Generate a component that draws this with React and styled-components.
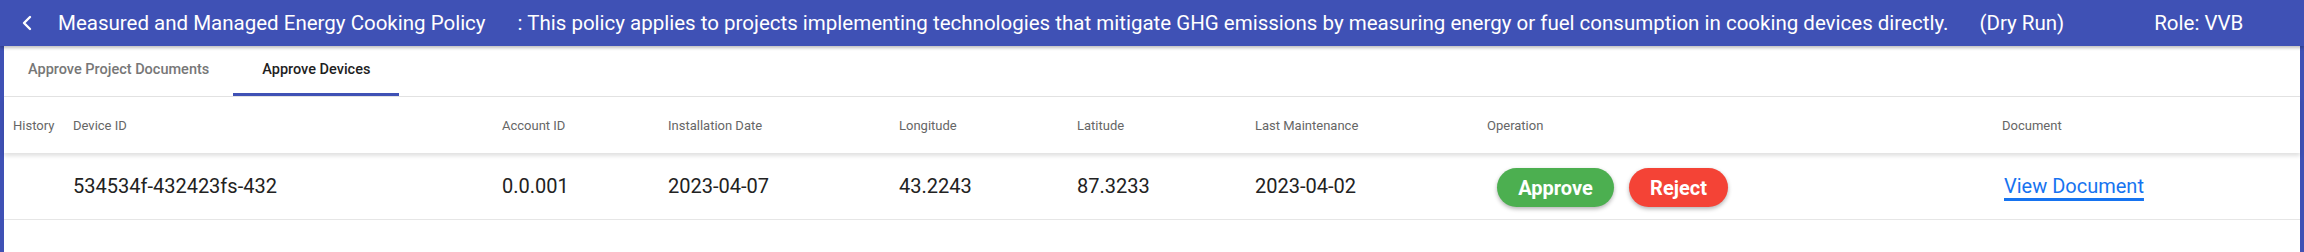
import React from 'react'
import styled, { createGlobalStyle } from "styled-components";

const GlobalStyle = createGlobalStyle`
  html, body {
    margin: 0;
    padding: 0;
    background: #3f51b5;
    font-family: Roboto, "Noto Sans", sans-serif;
  }
`;

const Page = styled.div`
  display: flex;
  flex-direction: column;
  height: 100vh;
  background-color: #3f51b5;
`;

const TopBar = styled.header`
  height: 46px;
  display: flex;
  align-items: center;
  color: white;
  font-size: 20.5px;
  white-space: nowrap;
  box-shadow: 0 2px 3px rgba(0,0,0,0.25);
  position: relative;
  z-index: 2;
`;

const BackButton = styled.button`
  background: none;
  border: none;
  padding: 0;
  margin: 0 22px 0 18px;
  width: 18px;
  height: 24px;
  display: flex;
  align-items: center;
  justify-content: center;
  cursor: pointer;
`;

const BarText = styled.span`
  margin-left: ${p => p.gap || 0}px;
`;

const Body = styled.main`
  flex: 1;
  margin: 0 4px;
  background: white;
`;

const TabRow = styled.div`
  display: flex;
  height: 50px;
  border-bottom: 1px solid #e3e3e3;
`;

const Tab = styled.div`
  display: flex;
  align-items: center;
  justify-content: center;
  padding: 0 ${p => p.pad}px;
  font-size: 14.5px;
  font-weight: 500;
  color: ${p => p.active ? "#1f1f1f" : "#777"};
  border-bottom: 3px solid ${p => p.active ? "#3f51b5" : "transparent"};
  box-sizing: border-box;
  cursor: pointer;
`;

const cols = "60px 429px 166px 231px 178px 178px 232px 515px 1fr";

const HeaderRow = styled.div`
  display: grid;
  grid-template-columns: ${cols};
  padding-left: 9px;
  height: 56px;
  align-items: center;
  box-shadow: 0 3px 4px rgba(0,0,0,0.12);
  position: relative;
`;

const HeadCell = styled.div`
  font-size: 13px;
  color: #666;
`;

const DataRow = styled.div`
  display: grid;
  grid-template-columns: ${cols};
  padding-left: 9px;
  height: 66px;
  align-items: center;
  border-bottom: 1px solid #e6e6e6;
`;

const Cell = styled.div`
  font-size: 20px;
  color: #222;
`;

const Actions = styled.div`
  display: flex;
  gap: 15px;
  padding-left: 10px;
  padding-top: 3px;
`;

const ActionButton = styled.button`
  height: 39px;
  width: ${p => p.w}px;
  border: none;
  border-radius: 20px;
  background: ${p => p.color};
  color: white;
  font-family: Roboto, sans-serif;
  font-size: 20px;
  font-weight: 700;
  box-shadow: 0 2px 4px rgba(0,0,0,0.3);
  cursor: pointer;
`;

const DocLink = styled.a`
  font-size: 20px;
  color: #1673f0;
  text-decoration: underline;
  text-decoration-thickness: 3px;
  text-underline-offset: 5px;
  margin-left: 2px;
  cursor: pointer;
`;

const headers = ["History", "Device ID", "Account ID", "Installation Date", "Longitude", "Latitude", "Last Maintenance", "Operation", "Document"];

const devices = [
  { id: "534534f-432423fs-432", account: "0.0.001", installed: "2023-04-07", lon: "43.2243", lat: "87.3233", maintained: "2023-04-02" },
];

export default function App() {
  return (
    <Page>
      <GlobalStyle />
      <TopBar>
        <BackButton>
          <svg width="12" height="16" viewBox="0 0 12 16">
            <path d="M9 2 L3 8 L9 14" fill="none" stroke="white" strokeWidth="2.4" strokeLinecap="round" strokeLinejoin="round" />
          </svg>
        </BackButton>
        <BarText>Measured and Managed Energy Cooking Policy</BarText>
        <BarText gap={32}>: This policy applies to projects implementing technologies that mitigate GHG emissions by measuring energy or fuel consumption in cooking devices directly.</BarText>
        <BarText gap={31}>(Dry Run)</BarText>
        <BarText gap={90}>Role: VVB</BarText>
      </TopBar>
      <Body>
        <TabRow>
          <Tab pad={24}>Approve Project Documents</Tab>
          <Tab pad={29} active>Approve Devices</Tab>
        </TabRow>
        <HeaderRow>
          {headers.map(h => <HeadCell key={h}>{h}</HeadCell>)}
        </HeaderRow>
        {devices.map(d => (
          <DataRow key={d.id}>
            <Cell></Cell>
            <Cell>{d.id}</Cell>
            <Cell>{d.account}</Cell>
            <Cell>{d.installed}</Cell>
            <Cell>{d.lon}</Cell>
            <Cell>{d.lat}</Cell>
            <Cell>{d.maintained}</Cell>
            <Actions>
              <ActionButton w={117} color="#4caf50">Approve</ActionButton>
              <ActionButton w={99} color="#f44336">Reject</ActionButton>
            </Actions>
            <Cell><DocLink>View Document</DocLink></Cell>
          </DataRow>
        ))}
      </Body>
    </Page>
  )
}
